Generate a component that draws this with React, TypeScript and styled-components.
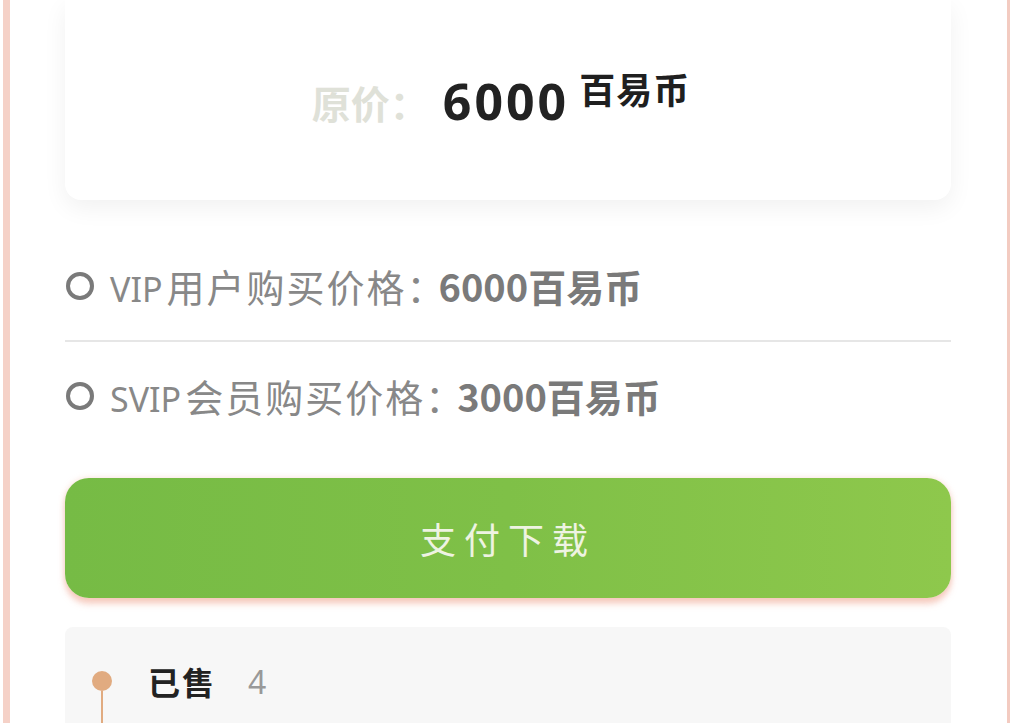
import styled, { createGlobalStyle } from "styled-components";

const GlobalStyle = createGlobalStyle`
    html, body {
        margin: 0;
        padding: 0;
        background: #ffffff;
        overflow: hidden;
    }
    body {
        font-family: "Noto Sans", "Noto Sans CJK SC", sans-serif;
    }
`;

const Shell = styled.div`
    margin-left: 3px;
    height: 723px;
    border-left: 7px solid #f5d1c7;
    border-right: 3px solid #f3cbc1;
    background: #ffffff;
    padding: 0 56px 0 55px;
    overflow: hidden;
`;

const PriceCard = styled.div`
    height: 200px;
    display: flex;
    align-items: center;
    justify-content: center;
    background: #ffffff;
    border-radius: 0 0 16px 16px;
    box-shadow: 0 8px 24px rgba(0, 0, 0, 0.06);
    padding-right: 14px;
`;

const PriceLabel = styled.span`
    font-family: "Noto Sans CJK SC", sans-serif;
    font-size: 39px;
    font-weight: 700;
    color: #dfe1d8;
    margin-top: 4px;
    margin-right: 14px;
`;

const PriceValue = styled.span`
    font-family: "Noto Sans", "Noto Sans CJK SC", sans-serif;
    font-size: 50px;
    font-weight: 700;
    color: #222222;
    letter-spacing: 3px;
    margin-top: 2px;
`;

const PriceUnit = styled.span`
    font-family: "Noto Sans CJK SC", sans-serif;
    font-size: 36px;
    font-weight: 700;
    color: #1f1f1f;
    margin-left: 10px;
    margin-top: -24px;
    letter-spacing: 1px;
`;

const OptionRow = styled.div`
    height: 108px;
    display: flex;
    align-items: center;
    gap: 16px;
    padding-left: 1px;
`;

const Radio = styled.span`
    width: 20px;
    height: 20px;
    border: 4px solid #7a7a7a;
    border-radius: 50%;
    flex-shrink: 0;
`;

const OptionText = styled.span`
    font-family: "Noto Sans CJK SC", sans-serif;
    font-size: 38px;
    color: #888888;
    letter-spacing: 2px;
    line-height: 1;
`;

const Latin = styled.span`
    font-family: "Noto Sans", sans-serif;
    font-size: 34px;
    letter-spacing: 0;
    margin-right: 4px;
`;

const OptionPrice = styled.b`
    color: #7a7a7a;
    font-weight: 700;
    letter-spacing: 0;
    margin-left: -8px;
`;

const Divider = styled.div`
    height: 2px;
    background: #e6e6e6;
`;

const FirstRow = styled(OptionRow)`
    margin-top: 32px;
`;

const PayButton = styled.button`
    display: flex;
    align-items: center;
    justify-content: center;
    width: 100%;
    height: 120px;
    margin-top: 28px;
    border: none;
    border-radius: 24px;
    background: linear-gradient(90deg, #76bb45 0%, #7fc047 50%, #8ec84c 100%);
    box-shadow: 0 6px 6px rgba(240, 170, 150, 0.55), 0 0 6px rgba(240, 180, 160, 0.4);
    font-family: "Noto Sans CJK SC", sans-serif;
    font-size: 36px;
    letter-spacing: 8px;
    color: #eef3e2;
    cursor: pointer;
`;

const SalesPanel = styled.div`
    margin-top: 29px;
    height: 120px;
    background: #f7f7f7;
    border-radius: 8px 8px 0 0;
    padding: 31px 0 0 27px;
    box-sizing: border-box;
`;

const SalesRow = styled.div`
    display: flex;
    align-items: center;
`;

const Marker = styled.div`
    position: relative;
    width: 20px;
    height: 20px;
    border-radius: 50%;
    background: #e1ab80;
    margin-right: 36px;

    &::after {
        content: "";
        position: absolute;
        left: 9px;
        top: 20px;
        width: 2px;
        height: 80px;
        background: #e1ab80;
    }
`;

const SalesLabel = styled.span`
    font-family: "Noto Sans CJK SC", sans-serif;
    font-size: 32px;
    font-weight: 700;
    color: #222222;
    letter-spacing: 2px;
`;

const SalesCount = styled.span`
    font-family: "Noto Sans", sans-serif;
    font-size: 32px;
    color: #999999;
    margin-left: 32px;
`;

const App = () => {
    return (
        <>
            <GlobalStyle />
            <Shell>
                <PriceCard>
                    <PriceLabel>原价：</PriceLabel>
                    <PriceValue>6000</PriceValue>
                    <PriceUnit>百易币</PriceUnit>
                </PriceCard>
                <FirstRow>
                    <Radio />
                    <OptionText><Latin>VIP</Latin>用户购买价格：<OptionPrice>6000百易币</OptionPrice></OptionText>
                </FirstRow>
                <Divider />
                <OptionRow>
                    <Radio />
                    <OptionText><Latin>SVIP</Latin>会员购买价格：<OptionPrice>3000百易币</OptionPrice></OptionText>
                </OptionRow>
                <PayButton>支付下载</PayButton>
                <SalesPanel>
                    <SalesRow>
                        <Marker />
                        <SalesLabel>已售</SalesLabel>
                        <SalesCount>4</SalesCount>
                    </SalesRow>
                </SalesPanel>
            </Shell>
        </>
    );
};

export default App;
